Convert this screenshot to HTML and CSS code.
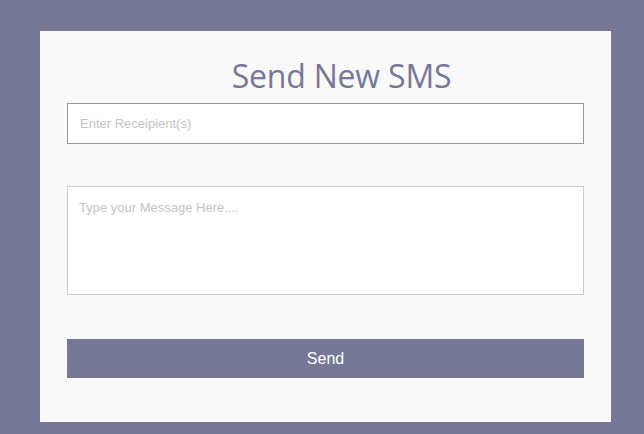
FILE: index.html
```html
<!DOCTYPE html>
<html>
<head>
<meta charset="utf-8">
<link rel="stylesheet" href="styles.css">
</head>
<body>
<div class="card">
  <h1 class="title">Send New SMS</h1>
  <input class="recipients" type="text" placeholder="Enter Receipient(s)" autofocus>
  <textarea class="message" placeholder="Type your Message Here...."></textarea>
  <button class="send">Send</button>
</div>
</body>
</html>
```
FILE: styles.css
```css
html, body {
  margin: 0;
  padding: 0;
  background: #777796;
}
body {
  padding: 31px 0 0 40px;
  height: 434px;
  box-sizing: border-box;
  overflow: hidden;
}
.card {
  width: 571px;
  height: 391px;
  box-sizing: border-box;
  background: #f9f9f9;
  padding: 0 27px;
  display: flex;
  flex-direction: column;
}
.title {
  margin: 0;
  height: 72px;
  box-sizing: border-box;
  padding: 26px 0 0 32px;
  text-align: center;
  font-family: "Open Sans", sans-serif;
  font-weight: 400;
  font-size: 32px;
  line-height: 38px;
  letter-spacing: -0.2px;
  color: #777796;
}
.recipients {
  height: 41px;
  box-sizing: border-box;
  border: 1px solid #999;
  background: #fff;
  padding: 0 12px;
  font-family: "Liberation Sans", Arial, sans-serif;
  font-size: 13px;
  outline: none;
  caret-color: #000;
  margin: 0;
}
.recipients::placeholder, .message::placeholder {
  color: #c4c4c4;
}
.message {
  margin: 42px 0 0;
  height: 109px;
  box-sizing: border-box;
  border: 1px solid #ccc;
  background: #fff;
  padding: 13px 11px;
  font-family: "Liberation Sans", Arial, sans-serif;
  font-size: 13px;
  resize: none;
  outline: none;
}
.send {
  margin-top: 44px;
  height: 39px;
  border: none;
  background: #777796;
  color: #fff;
  font-family: "Liberation Sans", Arial, sans-serif;
  font-size: 16px;
  padding: 0;
}
```
